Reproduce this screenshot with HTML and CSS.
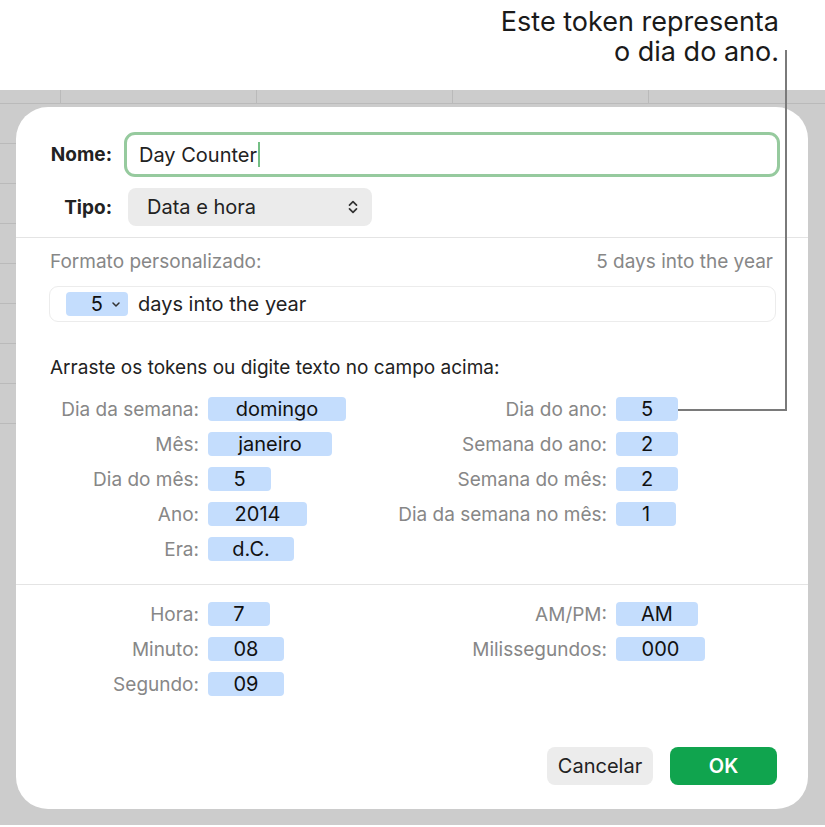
FILE: index.html
```html
<!DOCTYPE html>
<html lang="pt">
<head>
<meta charset="utf-8">
<title>Day Counter</title>
<link rel="stylesheet" href="styles.css">
</head>
<body>
<div class="page">
  <div class="callout">Este token representa<br>o dia do ano.</div>
  <div class="app">
    <div class="dialog">
      <div class="head">
        <span class="hlabel">Nome:</span>
        <div class="namefield"><span>Day Counter</span><span class="caret"></span></div>
        <span class="hlabel">Tipo:</span>
        <div class="popup"><span>Data e hora</span>
          <svg class="updown" width="10" height="16" viewBox="0 0 10 16"><path d="M1.5 6.2 L5 2.7 L8.5 6.2 M1.5 9.8 L5 13.3 L8.5 9.8" fill="none" stroke="#333" stroke-width="1.7" stroke-linecap="round" stroke-linejoin="round"/></svg>
        </div>
      </div>
      <div class="sep"></div>
      <div class="fmt-head"><span>Formato personalizado:</span><span>5 days into the year</span></div>
      <div class="fmt-field">
        <span class="chip chip-menu"><span>5</span><svg width="8" height="5" viewBox="0 0 8 5"><path d="M1 1 L4 4 L7 1" fill="none" stroke="#333" stroke-width="1.5" stroke-linecap="round" stroke-linejoin="round"/></svg></span>
        <span class="fmt-text">days into the year</span>
      </div>
      <p class="hint">Arraste os tokens ou digite texto no campo acima:</p>
      <div class="tokens">
        <span class="lbl">Dia da semana:</span><span class="chip w138">domingo</span>
        <span class="lbl">Dia do ano:</span><span class="chip w62">5</span>
        <span class="lbl">Mês:</span><span class="chip w124">janeiro</span>
        <span class="lbl">Semana do ano:</span><span class="chip w62">2</span>
        <span class="lbl">Dia do mês:</span><span class="chip w63">5</span>
        <span class="lbl">Semana do mês:</span><span class="chip w62">2</span>
        <span class="lbl">Ano:</span><span class="chip w99">2014</span>
        <span class="lbl">Dia da semana no mês:</span><span class="chip w60">1</span>
        <span class="lbl">Era:</span><span class="chip w86">d.C.</span>
        <span></span><span></span>
      </div>
      <div class="sep sep2"></div>
      <div class="tokens time">
        <span class="lbl">Hora:</span><span class="chip w62">7</span>
        <span class="lbl">AM/PM:</span><span class="chip w82">AM</span>
        <span class="lbl">Minuto:</span><span class="chip w76">08</span>
        <span class="lbl">Milissegundos:</span><span class="chip w89">000</span>
        <span class="lbl">Segundo:</span><span class="chip w76">09</span>
        <span></span><span></span>
      </div>
      <div class="actions">
        <button class="btn cancel">Cancelar</button>
        <button class="btn ok">OK</button>
      </div>
    </div>
  </div>
  <svg class="leader" width="825" height="827" viewBox="0 0 825 827"><polyline points="786,50 786,410 678,410" fill="none" stroke="#7a7a7a" stroke-width="2"/></svg>
</div>
</body>
</html>
```
FILE: styles.css
```css
html, body {
  margin: 0;
  padding: 0;
}
body {
  width: 825px;
  height: 827px;
  overflow: hidden;
  background: #fff;
  font-family: Inter, "Liberation Sans", sans-serif;
  color: #1d1d1d;
}
.page {
  position: relative;
  height: 827px;
}
.callout {
  height: 90px;
  box-sizing: border-box;
  padding: 7px 46px 0 0;
  text-align: right;
  font-size: 27px;
  line-height: 29.5px;
  color: #1a1a1a;
}
.app {
  height: 735px;
  box-sizing: border-box;
  padding: 17px 17px 0 16px;
  background-color: #cccccc;
  background-image:
    linear-gradient(to right, transparent 60px, #bababa 60px, #bababa 61px, transparent 61px),
    linear-gradient(#bababa, #bababa),
    repeating-linear-gradient(to bottom, #bababa 0, #bababa 1px, transparent 1px, transparent 40px);
  background-size: 196px 13px, 100% 1px, 16px 321px;
  background-position: 0 0, 0 13px, 0 13px;
  background-repeat: repeat-x, no-repeat, no-repeat;
}
.dialog {
  height: 702px;
  box-sizing: border-box;
  background: #fff;
  border-radius: 32px;
  padding-top: 25px;
}
.head {
  display: grid;
  grid-template-columns: 96px 1fr;
  grid-template-rows: 45px 38px;
  column-gap: 12px;
  row-gap: 11px;
  padding-right: 28px;
  align-items: center;
}
.hlabel {
  text-align: right;
  font-weight: 700;
  font-size: 19px;
  color: #222;
}
.namefield {
  height: 45px;
  box-sizing: border-box;
  border: 3px solid #96ca9e;
  border-radius: 11px;
  padding-left: 12px;
  display: flex;
  align-items: center;
  font-size: 20px;
  color: #222;
}
.caret {
  display: inline-block;
  width: 2px;
  height: 25px;
  background: #74bf85;
  margin-left: 1px;
}
.popup {
  justify-self: start;
  margin-left: 4px;
  width: 244px;
  height: 38px;
  box-sizing: border-box;
  background: #ebebeb;
  border-radius: 8px;
  padding: 0 14px 0 19px;
  display: flex;
  align-items: center;
  justify-content: space-between;
  font-size: 20px;
  color: #222;
}
.sep {
  height: 1px;
  background: #e4e4e4;
  margin-top: 11px;
}
.fmt-head {
  display: flex;
  justify-content: space-between;
  padding: 12px 35px 0 34px;
  font-size: 19px;
  line-height: 24px;
  color: #878787;
}
.fmt-field {
  margin: 12px 32px 0 33px;
  height: 36px;
  box-sizing: border-box;
  border: 1px solid #ececec;
  border-radius: 9px;
  display: flex;
  align-items: center;
  padding-left: 16px;
  gap: 10px;
}
.chip {
  justify-self: start;
  display: inline-flex;
  align-items: center;
  justify-content: center;
  height: 24px;
  box-sizing: border-box;
  background: #c4ddfd;
  border-radius: 4px;
  font-size: 20px;
  color: #111;
}
.chip-menu {
  width: 62px;
  justify-content: flex-end;
  padding-right: 8px;
  gap: 9px;
}
.fmt-text {
  font-size: 20px;
  color: #222;
}
.hint {
  margin: 34px 0 0 0;
  padding-left: 34px;
  font-size: 19px;
  line-height: 24px;
  color: #222;
}
.tokens {
  display: grid;
  grid-template-columns: 150px 170px 220px 1fr;
  grid-auto-rows: 24px;
  column-gap: 9px;
  row-gap: 11px;
  padding-left: 33px;
  margin-top: 17px;
  align-items: center;
}
.lbl {
  text-align: right;
  font-size: 19px;
  color: #878787;
}
.sep2 {
  margin-top: 23px;
}
.w138 { width: 138px; }
.w124 { width: 124px; }
.w99 { width: 99px; }
.w89 { width: 89px; }
.w86 { width: 86px; }
.w82 { width: 82px; }
.w76 { width: 76px; }
.w63 { width: 63px; }
.w62 { width: 62px; }
.w60 { width: 60px; }
.actions {
  display: flex;
  justify-content: flex-end;
  gap: 17px;
  padding-right: 31px;
  margin-top: 51px;
}
.btn {
  height: 38px;
  border: none;
  border-radius: 8px;
  font-family: Inter, "Liberation Sans", sans-serif;
  font-size: 20px;
  padding: 0;
}
.cancel {
  width: 106px;
  background: #ececec;
  color: #222;
}
.ok {
  width: 107px;
  background: #10a44e;
  color: #fff;
  font-weight: 600;
}
.leader {
  position: absolute;
  left: 0;
  top: 0;
  pointer-events: none;
}
```
